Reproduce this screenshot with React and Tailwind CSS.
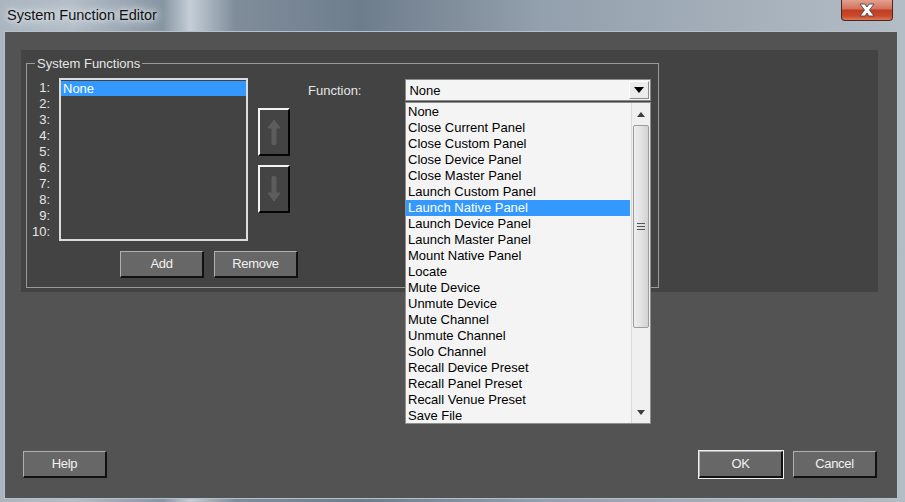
import React from "react";

const items = [
  "None",
  "Close Current Panel",
  "Close Custom Panel",
  "Close Device Panel",
  "Close Master Panel",
  "Launch Custom Panel",
  "Launch Native Panel",
  "Launch Device Panel",
  "Launch Master Panel",
  "Mount Native Panel",
  "Locate",
  "Mute Device",
  "Unmute Device",
  "Mute Channel",
  "Unmute Channel",
  "Solo Channel",
  "Recall Device Preset",
  "Recall Panel Preset",
  "Recall Venue Preset",
  "Save File",
];

function GrayButton({ children, className = "" }) {
  return (
    <div
      className={
        "w-[84px] h-[27px] bg-[#676767] border-t border-l border-[#b0b0b0] border-b-2 border-r-2 border-b-[#111] border-r-[#111] flex items-center justify-center text-[13px] text-[#f2f2f2] tracking-[-0.3px] " +
        className
      }
    >
      {children}
    </div>
  );
}

function MoveButton({ down }) {
  return (
    <div className="w-[32px] h-[48px] border-t-2 border-l-2 border-[#f4f4f4] border-b-2 border-r-2 border-b-[#050505] border-r-[#050505] bg-[#444] flex items-center justify-center">
      <svg width="14" height="28" viewBox="0 0 14 28">
        <path
          d={
            down
              ? "M7 26 L13 18 L9 18 L9 2 Q7 1 5 2 L5 18 L1 18 Z"
              : "M7 2 L13 10 L9 10 L9 26 Q7 27 5 26 L5 10 L1 10 Z"
          }
          fill="#5d5d5d"
          stroke="#5d5d5d"
          strokeLinejoin="round"
          strokeWidth="1"
        />
      </svg>
    </div>
  );
}

export default function App() {
  return (
    <div className="w-[905px] h-[502px] relative overflow-hidden flex flex-col font-['Liberation_Sans',Arial,sans-serif] bg-[linear-gradient(90deg,#aab5c0_0%,#b4bec8_8%,#8795a3_18%,#c5ced6_21%,#7f8d9b_26%,#6e7d8c_40%,#93a0ad_60%,#a3aeb9_80%,#b3bdc6_100%)]">
      {/* Title bar */}
      <div className="h-[31px] relative flex items-start pl-[7px] pt-[6px] shrink-0">
        <div className="text-[14.5px] leading-[18px] text-[#111] [text-shadow:0_0_8px_#dfe4e9,0_0_14px_#dfe4e9,0_0_4px_#e6eaee]">
          System Function Editor
        </div>
        <div className="absolute left-[841px] top-0 w-[52px] h-[21px] rounded-b-[4px] border border-t-0 border-[#4d2621] bg-[linear-gradient(180deg,#e3a08f_0%,#d0715b_45%,#c23b22_50%,#c84a2c_80%,#dd7a55_100%)] flex items-center justify-center">
          <svg width="20" height="14" viewBox="0 0 20 14">
            <path
              d="M3 1 L8 1 L10 4 L12 1 L17 1 L12.5 7 L17 13 L12 13 L10 10 L8 13 L3 13 L7.5 7 Z"
              fill="#ffffff"
              stroke="#4a4a4a"
              strokeWidth="0.9"
              strokeLinejoin="round"
            />
          </svg>
        </div>
      </div>

      {/* Client area */}
      <div className="ml-[4px] w-[894px] h-[468px] border border-[#b7c0c8] bg-[#535353] flex flex-col pl-[16px] pr-[20px] pt-[18px]">
        {/* Dark panel */}
        <div className="w-[857px] h-[242px] bg-[#434343] pl-[5px] pt-[13px]">
          {/* Group box */}
          <div className="relative w-[633px] h-[225px] border border-[#9a9a9a] pt-[14px] pl-[1px]">
            <div className="absolute left-[8px] top-[-8px] px-[2px] bg-[#434343] text-[13px] leading-[15px] text-[#e6e6e6]">
              System Functions
            </div>
            <div className="flex items-start">
              {/* Numbers */}
              <div className="w-[22px] pt-[2px] flex flex-col items-end text-[13px] leading-[16px] text-[#e6e6e6]">
                {[1, 2, 3, 4, 5, 6, 7, 8, 9, 10].map((n) => (
                  <div key={n} className="h-[16px]">
                    {n}:
                  </div>
                ))}
              </div>
              {/* Listbox */}
              <div className="ml-[9px] w-[189px] h-[163px] border-2 border-[#dcdcdc] bg-[#434343] pt-[1px]">
                <div className="h-[15px] bg-[#3399ff] text-white text-[13px] leading-[15px] pl-[2px]">
                  None
                </div>
              </div>
              {/* Move buttons */}
              <div className="ml-[10px] mt-[30px] flex flex-col gap-[9px]">
                <MoveButton />
                <MoveButton down />
              </div>
              <div className="ml-[18px] mt-[5px] text-[13px] leading-[15px] text-[#e6e6e6]">
                Function:
              </div>
              {/* Combobox */}
              <div className="ml-[44px] mt-[1px] w-[246px] h-[22px] border border-[#8a8a8a] bg-[#f4f4f4] flex items-center">
                <div className="flex-1 pl-[3px] text-[13px] leading-[15px] text-black">
                  None
                </div>
                <div className="w-[20px] h-[18px] mr-[1px] bg-[#ececec] border border-t-[#ffffff] border-l-[#ffffff] border-b-[#8c8c8c] border-r-[#8c8c8c] flex items-center justify-center">
                  <svg width="10" height="6" viewBox="0 0 10 6">
                    <path d="M0 0 L10 0 L5 6 Z" fill="#000" />
                  </svg>
                </div>
              </div>
            </div>
            <div className="flex gap-[10px] ml-[92px] mt-[10px]">
              <GrayButton>Add</GrayButton>
              <GrayButton>Remove</GrayButton>
            </div>
          </div>
        </div>

        {/* Bottom buttons */}
        <div className="mt-auto mb-[19px] flex items-center ml-[2px]">
          <GrayButton>Help</GrayButton>
          <div className="ml-auto border border-[#f0f0f0]">
            <GrayButton className="w-[82px] h-[25px]">OK</GrayButton>
          </div>
          <GrayButton className="ml-[9px]">Cancel</GrayButton>
        </div>
      </div>

      {/* Dropdown list (overlay) */}
      <div className="absolute left-[405px] top-[102px] w-[246px] h-[322px] border border-[#8f8f8f] bg-[#f4f4f4] flex">
        <div className="flex-1 pt-[1px]">
          {items.map((it, i) => (
            <div
              key={it}
              className={
                "h-[16px] text-[13px] leading-[16px] pl-[2px] " +
                (i === 6 ? "bg-[#3399ff] text-white" : "text-black")
              }
            >
              {it}
            </div>
          ))}
        </div>
        <div className="w-[19px] ml-[1px] border-l border-[#dadada] bg-[#f0f0f0] flex flex-col items-center">
          <div className="h-[22px] w-full flex items-center justify-center">
            <svg width="8" height="5" viewBox="0 0 8 5">
              <path d="M4 0 L8 5 L0 5 Z" fill="#3f3f3f" />
            </svg>
          </div>
          <div className="w-[16px] h-[203px] rounded-[2px] border border-[#9c9c9c] bg-[linear-gradient(90deg,#eeeeee_0%,#e2e2e2_50%,#d2d2d2_100%)] flex items-center justify-center">
            <div className="flex flex-col gap-[2px]">
              <div className="w-[8px] h-[1px] bg-[#555]" />
              <div className="w-[8px] h-[1px] bg-[#555]" />
              <div className="w-[8px] h-[1px] bg-[#555]" />
            </div>
          </div>
          <div className="mt-auto h-[22px] w-full flex items-center justify-center">
            <svg width="8" height="5" viewBox="0 0 8 5">
              <path d="M0 0 L8 0 L4 5 Z" fill="#3f3f3f" />
            </svg>
          </div>
        </div>
      </div>
    </div>
  );
}
